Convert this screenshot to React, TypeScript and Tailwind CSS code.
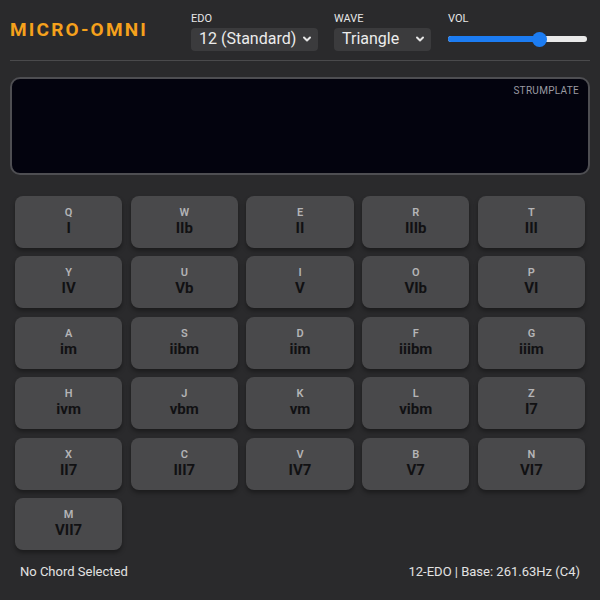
import React, { useState } from "react";

const chords = [
  ["Q", "I"], ["W", "IIb"], ["E", "II"], ["R", "IIIb"], ["T", "III"],
  ["Y", "IV"], ["U", "Vb"], ["I", "V"], ["O", "VIb"], ["P", "VI"],
  ["A", "im"], ["S", "iibm"], ["D", "iim"], ["F", "iiibm"], ["G", "iiim"],
  ["H", "ivm"], ["J", "vbm"], ["K", "vm"], ["L", "vibm"], ["Z", "I7"],
  ["X", "II7"], ["C", "III7"], ["V", "IV7"], ["B", "V7"], ["N", "VI7"],
  ["M", "VII7"],
];

function Chevron() {
  return (
    <svg width="10" height="10" viewBox="0 0 10 10" className="ml-auto">
      <path d="M2 3.5 L5 6.5 L8 3.5" fill="none" stroke="#e5e5e5" strokeWidth="2" strokeLinecap="round" strokeLinejoin="round" />
    </svg>
  );
}

function FakeSelect({ label, value, width }: { label: string; value: string; width: string }) {
  return (
    <div className="flex flex-col">
      <span className="text-[11px] leading-[13px] text-[#e6e6e6] mb-[3px]">{label}</span>
      <div className={`flex items-center h-[23px] rounded-[4px] bg-[#3b3b3d] pl-[8px] pr-[6px] text-[16px] text-[#ececec] ${width}`}>
        <span>{value}</span>
        <Chevron />
      </div>
    </div>
  );
}

export default function App() {
  const [selected] = useState<string | null>(null);

  return (
    <div className="w-[600px] h-[600px] bg-[#2a2a2c] px-[10px] flex flex-col" style={{ fontFamily: "Roboto, 'Noto Sans', sans-serif" }}>
      <div className="shrink-0 flex items-center h-[61px] border-b border-[#4a4a4c]">
        <h1 className="text-[19px] font-bold tracking-[2.2px] text-[#f5a11c] w-[181px]">MICRO-OMNI</h1>
        <div className="flex items-center gap-[16px] mt-[2px]">
          <FakeSelect label="EDO" value="12 (Standard)" width="w-[127px]" />
          <FakeSelect label="WAVE" value="Triangle" width="w-[97px]" />
          <div className="flex flex-col ml-[1px]">
            <span className="text-[11px] leading-[13px] text-[#e6e6e6] mb-[3px]">VOL</span>
            <div className="relative w-[139px] h-[23px] flex items-center">
              <div className="w-full h-[6px] rounded-full bg-[#e9e9e9]">
                <div className="h-full w-[66%] rounded-full bg-[#1c7cf2]" />
              </div>
              <div className="absolute left-[84px] w-[15px] h-[15px] rounded-full bg-[#1c7cf2]" />
            </div>
          </div>
        </div>
      </div>

      <div className="shrink-0 mt-[16px] h-[98px] rounded-[10px] border-2 border-[#4e4e52] bg-[#03030e] flex justify-end">
        <span className="text-[10px] text-[#9a9aa2] tracking-[0.3px] mt-[4px] mr-[9px]">STRUMPLATE</span>
      </div>

      <div className="shrink-0 grid grid-cols-5 gap-x-[8.5px] gap-y-[8.4px] px-[5px] mt-[21px]">
        {chords.map(([key, name]) => (
          <button
            key={key}
            className="h-[52px] rounded-[8px] bg-[#49494b] shadow-[0_3px_4px_rgba(0,0,0,0.35)] flex flex-col items-center justify-center"
          >
            <span className="text-[11px] leading-[13px] font-semibold text-[#b4b4b6]">{key}</span>
            <span className="text-[15px] leading-[19px] font-bold text-[#111113]">{name}</span>
          </button>
        ))}
      </div>

      <div className="flex-1 flex items-center justify-between px-[10px] pb-[6px] text-[13px] text-[#e2e2e2]">
        <span>{selected ?? "No Chord Selected"}</span>
        <span>12-EDO | Base: 261.63Hz (C4)</span>
      </div>
    </div>
  );
}
